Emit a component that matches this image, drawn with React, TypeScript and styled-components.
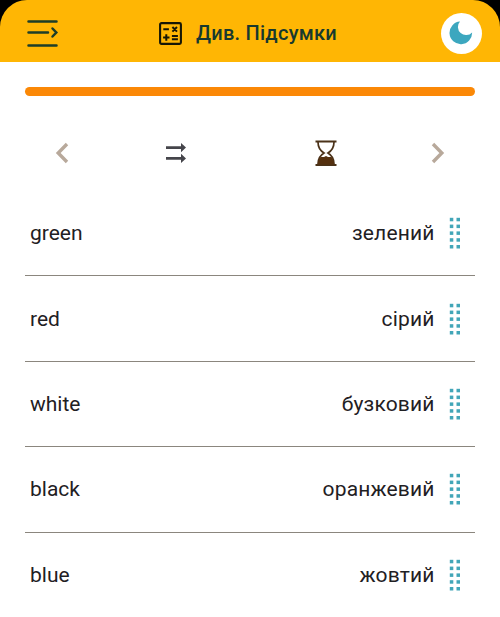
import React from "react";
import styled, { createGlobalStyle } from "styled-components";

const GlobalStyle = createGlobalStyle`
  * { box-sizing: border-box; }
  body { margin: 0; background: #fff; overflow: hidden; }
`;

const Screen = styled.div`
  display: flex;
  flex-direction: column;
  width: 500px;
  height: 617px;
  overflow: hidden;
  background: #fff;
  font-family: Roboto, "Noto Sans", sans-serif;
  color: #1f2023;
`;

const HeaderBackdrop = styled.div`
  flex: none;
  background: #000;
`;

const Header = styled.header`
  display: grid;
  grid-template-columns: 44px 1fr 41px;
  align-items: center;
  height: 62px;
  padding: 4px 18.5px 0 20px;
  background: #ffb604;
  border-radius: 27px 27px 0 0;
`;

const IconButton = styled.button`
  display: flex;
  align-items: center;
  justify-content: center;
  padding: 0;
  border: 0;
  background: none;
`;

const MoonButton = styled(IconButton)`
  width: 41px;
  height: 41px;
  border-radius: 50%;
  background: #fff;
`;

const Title = styled.h1`
  display: flex;
  align-items: center;
  gap: 14px;
  margin: 0;
  padding-left: 95px;
  font-size: 20px;
  font-weight: 500;
  letter-spacing: 0.25px;
  line-height: 24px;
  white-space: nowrap;
  color: #17392f;
`;

const Progress = styled.div`
  flex: none;
  height: 9px;
  margin: 25px 25px 0;
  border-radius: 5px;
  background: #fb8806;
`;

const Toolbar = styled.nav`
  flex: none;
  display: grid;
  grid-template-columns: 74px 154px 145px 79px;
  align-items: center;
  height: 95px;
  padding: 19px 0 0 25px;
`;

const WordList = styled.ul`
  flex: none;
  margin: 0;
  padding: 0 25px;
  list-style: none;
`;

const WordRow = styled.li`
  display: flex;
  align-items: center;
  height: 85.4px;
  padding: 0 14px 0 5px;
  font-size: 21px;
  line-height: 26px;
  border-bottom: 1px solid #8b867e;

  &:last-child { border-bottom: 0; }
`;

const Translation = styled.span`
  margin-left: auto;
  letter-spacing: 0.15px;
`;

const Word = styled.span``;

const Handle = styled.svg`
  display: block;
  margin-left: 14.5px;
  fill: #42a6b8;
`;

const MenuIcon = () => (
  <svg width="34" height="30" viewBox="0 0 34 30" fill="none" stroke="#1d3e29" strokeWidth="2.5" strokeLinecap="round">
    <path d="M3.5 3.5h28M3.5 14.5h19.5M3.5 27.5h28" />
    <path d="M27.5 10.5l3.8 4-3.8 4" />
  </svg>
);

const CalculatorIcon = () => (
  <svg width="23" height="23" viewBox="0 0 23 23" fill="none" stroke="#171706" strokeWidth="2">
    <rect x="1.1" y="1.1" width="20.8" height="20.8" rx="1.4" strokeWidth="2.1" />
    <path d="M4.3 7.2h5.6M13.4 5l4.6 4.6M18 5l-4.6 4.6M4.1 15.5h6.4M7.3 12.3v6.4M12.9 14h6M12.9 17.2h6" />
  </svg>
);

const MoonIcon = () => (
  <svg width="24" height="24" viewBox="0 0 24 24">
    <path d="M11 .6A11.3 11.3 0 1 0 23.1 11.4 6.8 6.8 0 1 1 11 .6z" fill="#3ca7bf" />
  </svg>
);

const Chevron = ({ next = false }: { next?: boolean }) => (
  <svg width="14" height="22" viewBox="0 0 14 22" fill="none" stroke="#b8a99b" strokeWidth="3.4">
    <path d={next ? "M2 2l8.8 9L2 20" : "M12 2l-8.8 9 8.8 9"} />
  </svg>
);

const ArrowsIcon = () => (
  <svg width="22" height="20" viewBox="0 0 22 20">
    <path d="M1 3.2h15V0L21 4.6l-5 4.6V6H1zM1 14h15v-3.200l5 4.600-5 4.600v-3.200H1z" fill="#45454b" />
  </svg>
);

const HourglassIcon = () => (
  <svg width="22" height="26" viewBox="0 0 22 26" fill="none" stroke="#4b3219">
    <path d="M.5 1.5h21M.5 25h21" strokeWidth="2" />
    <path d="M3 2c0 6 2 8.600 6 11-4 2.400-6 5-6 11M19 2c0 6-2 8.600-6 11 4 2.400 6 5 6 11" strokeWidth="1.7" />
    <path d="M5.500 17h3.500l2-1 2 1h3.500c1.500 2 2.500 4.400 2.500 7.500H3c0-3.100 1-5.500 2.500-7.500z" fill="#55300f" stroke="none" />
  </svg>
);

const DragHandle = () => (
  <Handle width="12" height="32" viewBox="0 0 12 32">
    {[0, 1, 2, 3, 4].map((row) => (
      <React.Fragment key={row}>
        <rect x="0.8" y={0.8 + row * 6.8} width="3.5" height="3.5" />
        <rect x="7.5" y={0.8 + row * 6.8} width="3.5" height="3.5" />
      </React.Fragment>
    ))}
  </Handle>
);

const pairs = [
  ["green", "зелений"],
  ["red", "сірий"],
  ["white", "бузковий"],
  ["black", "оранжевий"],
  ["blue", "жовтий"],
];

export default function App() {
  return (
    <Screen>
      <GlobalStyle />
      <HeaderBackdrop>
        <Header>
          <IconButton aria-label="Menu"><MenuIcon /></IconButton>
          <Title><CalculatorIcon />Див. Підсумки</Title>
          <MoonButton aria-label="Dark mode"><MoonIcon /></MoonButton>
        </Header>
      </HeaderBackdrop>
      <Progress />
      <Toolbar>
        <IconButton aria-label="Previous"><Chevron /></IconButton>
        <IconButton aria-label="Direction"><ArrowsIcon /></IconButton>
        <IconButton aria-label="Timer"><HourglassIcon /></IconButton>
        <IconButton aria-label="Next"><Chevron next /></IconButton>
      </Toolbar>
      <WordList>
        {pairs.map(([word, translation]) => (
          <WordRow key={word}>
            <Word>{word}</Word>
            <Translation>{translation}</Translation>
            <DragHandle />
          </WordRow>
        ))}
      </WordList>
    </Screen>
  );
}
